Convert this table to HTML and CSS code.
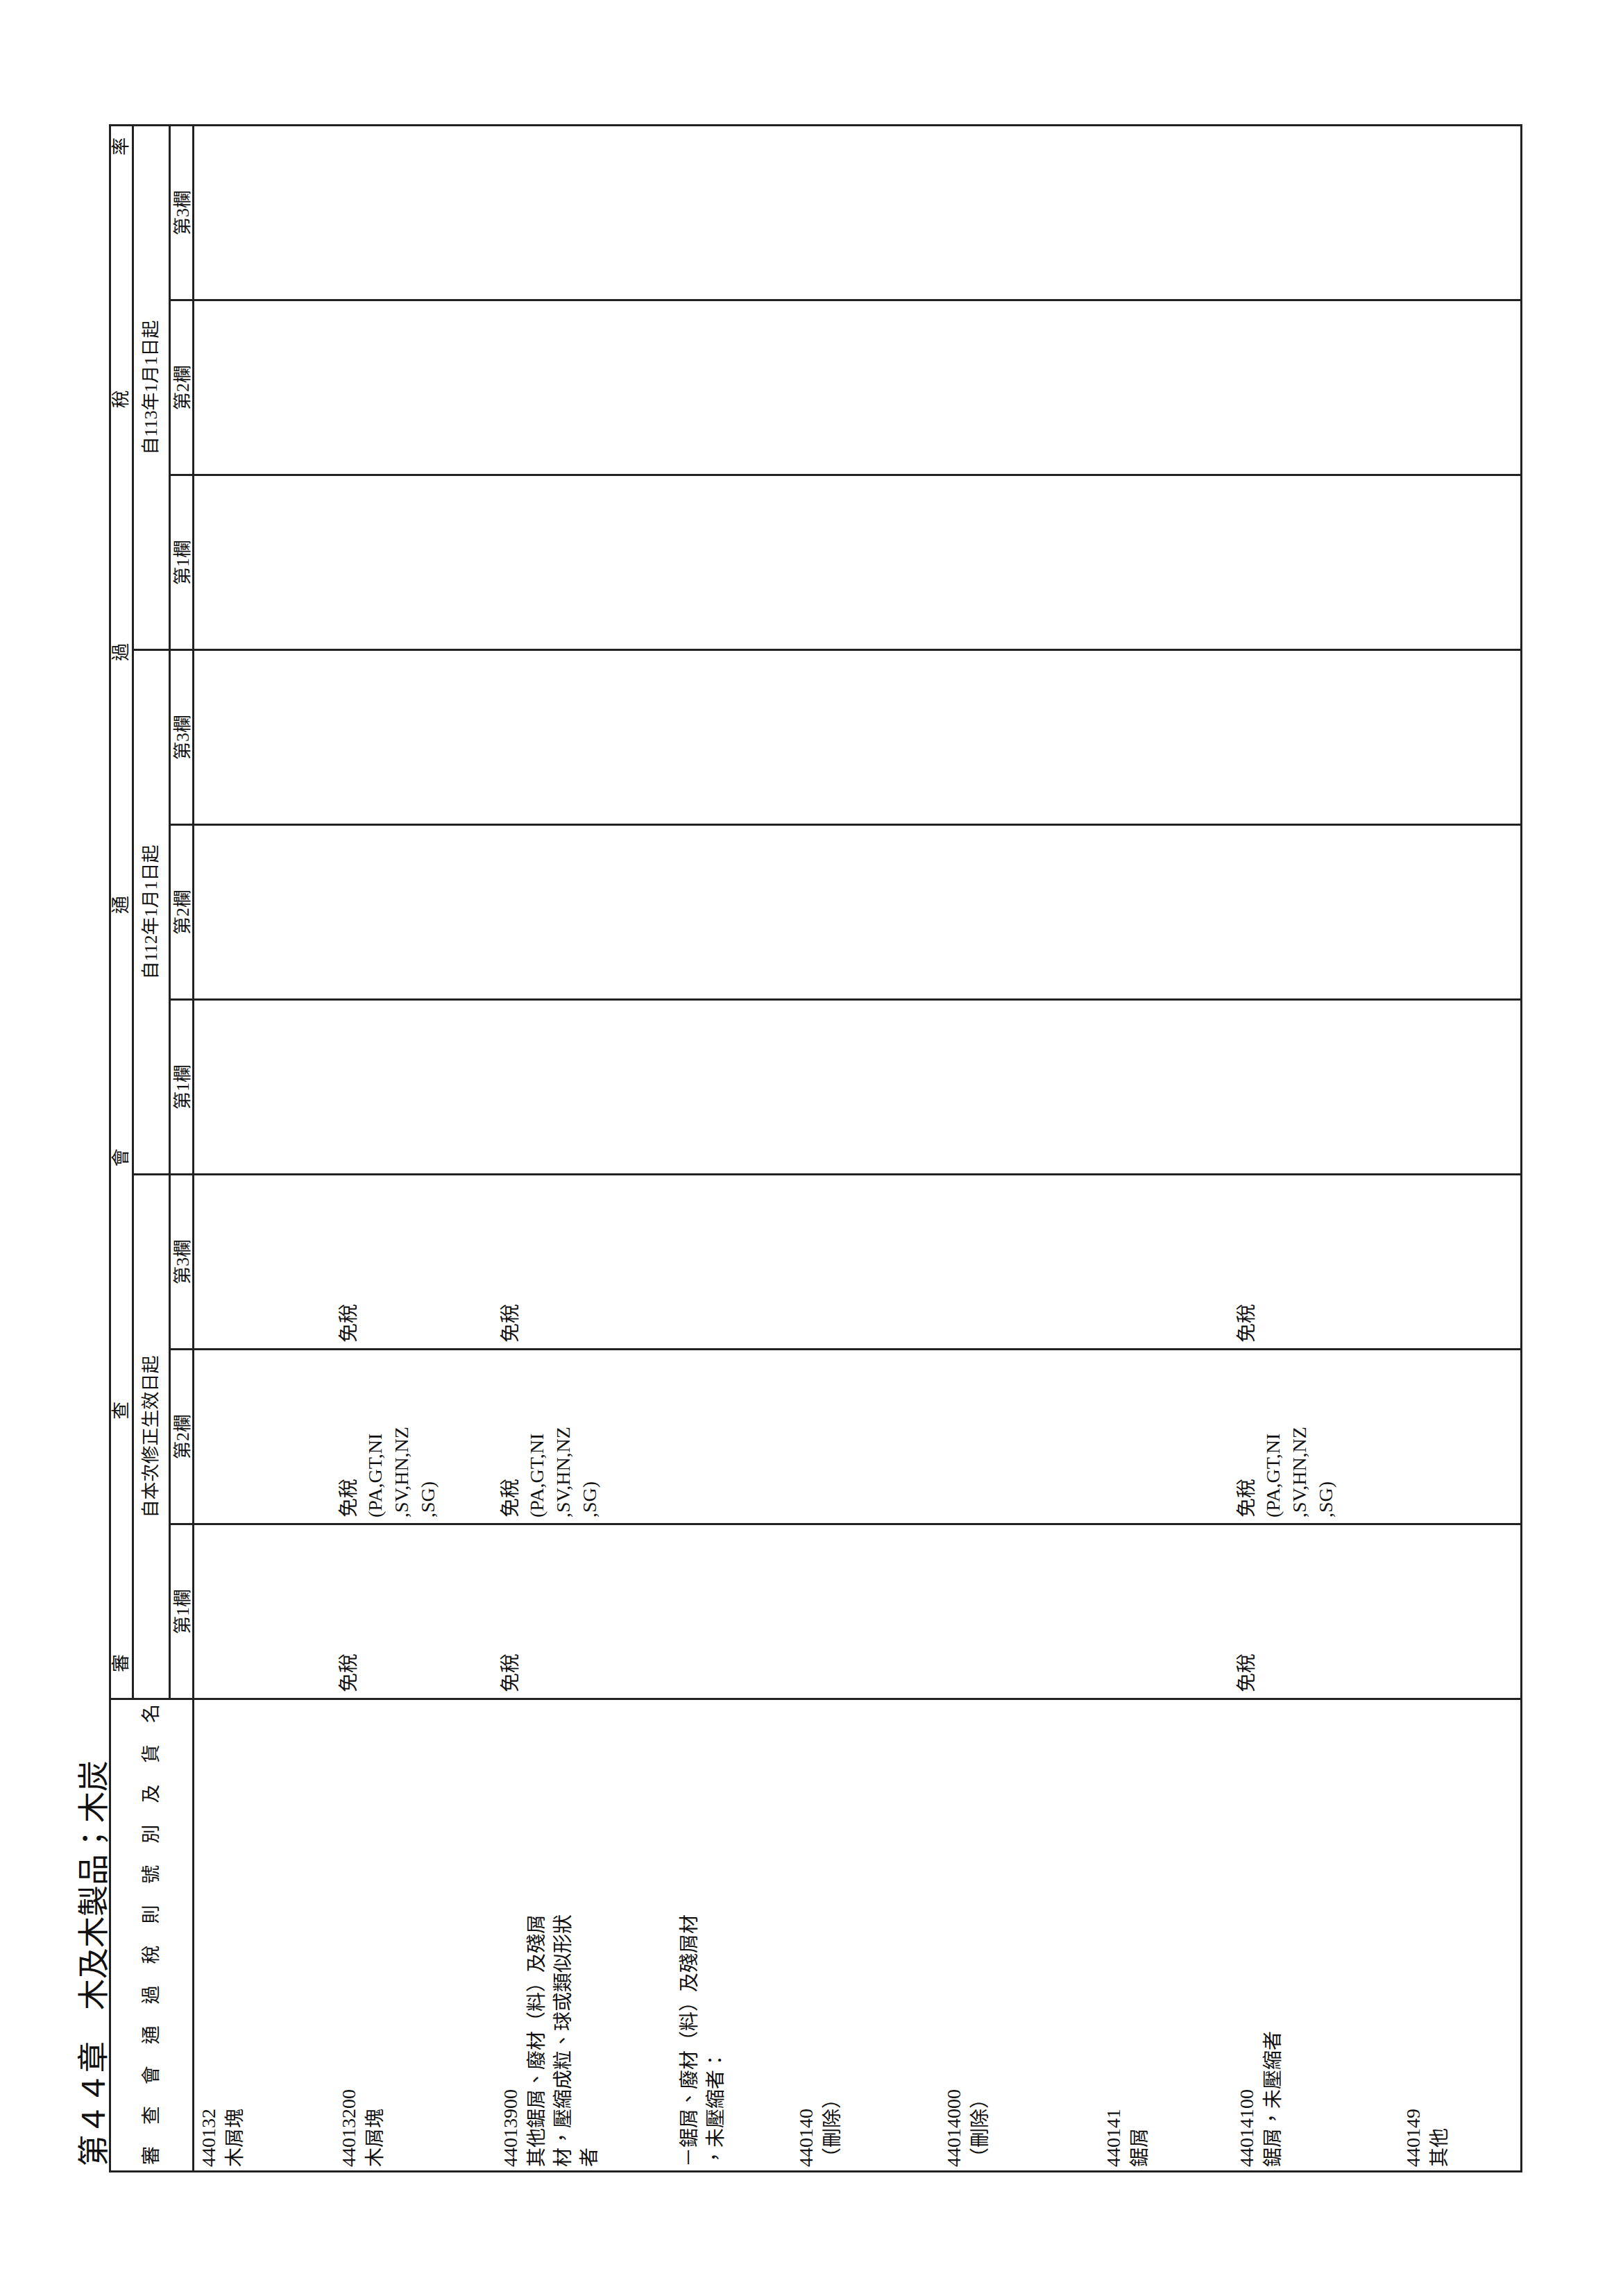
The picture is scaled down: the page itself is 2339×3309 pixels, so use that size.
FILE: index.html
```html
<!DOCTYPE html>
<html lang="zh-Hant">
<head>
<meta charset="utf-8">
<title>第44章 木及木製品；木炭</title>
<link rel="stylesheet" href="styles.css">
</head>
<body>
<div class="sheet">
  <div class="land">
    <h1 class="title">第４４章　木及木製品；木炭</h1>
    <div class="tbl">
      <div class="head">
        <div class="h-goods"><span>審</span><span>查</span><span>會</span><span>通</span><span>過</span><span>稅</span><span>則</span><span>號</span><span>別</span><span>及</span><span>貨</span><span>名</span></div>
        <div class="h-rates">
          <div class="hr1"><span>審</span><span>查</span><span>會</span><span>通</span><span>過</span><span>稅</span><span>率</span></div>
          <div class="hr2">
            <div class="grp">自本次修正生效日起</div>
            <div class="grp">自112年1月1日起</div>
            <div class="grp">自113年1月1日起</div>
          </div>
          <div class="hr3">
            <div class="col">第1欄</div><div class="col">第2欄</div><div class="col">第3欄</div>
            <div class="col">第1欄</div><div class="col">第2欄</div><div class="col">第3欄</div>
            <div class="col">第1欄</div><div class="col">第2欄</div><div class="col">第3欄</div>
          </div>
        </div>
      </div>
      <div class="body">
        <div class="row r1">
          <div class="g">440132<br>木屑塊</div>
          <div class="c"></div><div class="c"></div><div class="c"></div><div class="c"></div><div class="c"></div><div class="c"></div><div class="c"></div><div class="c"></div><div class="c"></div>
        </div>
        <div class="row r2">
          <div class="g">44013200<br>木屑塊</div>
          <div class="c">免稅</div><div class="c">免稅<br>(PA,GT,NI<br>,SV,HN,NZ<br>,SG)</div><div class="c">免稅</div>
          <div class="c"></div><div class="c"></div><div class="c"></div><div class="c"></div><div class="c"></div><div class="c"></div>
        </div>
        <div class="row r3">
          <div class="g">44013900<br>其他鋸屑、廢材（料）及殘屑<br>材，壓縮成粒、球或類似形狀<br>者</div>
          <div class="c">免稅</div><div class="c">免稅<br>(PA,GT,NI<br>,SV,HN,NZ<br>,SG)</div><div class="c">免稅</div>
          <div class="c"></div><div class="c"></div><div class="c"></div><div class="c"></div><div class="c"></div><div class="c"></div>
        </div>
        <div class="row r4">
          <div class="g">－鋸屑、廢材（料）及殘屑材<br>，未壓縮者：</div>
          <div class="c"></div><div class="c"></div><div class="c"></div><div class="c"></div><div class="c"></div><div class="c"></div><div class="c"></div><div class="c"></div><div class="c"></div>
        </div>
        <div class="row r5">
          <div class="g">440140<br>（刪除）</div>
          <div class="c"></div><div class="c"></div><div class="c"></div><div class="c"></div><div class="c"></div><div class="c"></div><div class="c"></div><div class="c"></div><div class="c"></div>
        </div>
        <div class="row r6">
          <div class="g">44014000<br>（刪除）</div>
          <div class="c"></div><div class="c"></div><div class="c"></div><div class="c"></div><div class="c"></div><div class="c"></div><div class="c"></div><div class="c"></div><div class="c"></div>
        </div>
        <div class="row r7">
          <div class="g">440141<br>鋸屑</div>
          <div class="c"></div><div class="c"></div><div class="c"></div><div class="c"></div><div class="c"></div><div class="c"></div><div class="c"></div><div class="c"></div><div class="c"></div>
        </div>
        <div class="row r8">
          <div class="g">44014100<br>鋸屑，未壓縮者</div>
          <div class="c">免稅</div><div class="c">免稅<br>(PA,GT,NI<br>,SV,HN,NZ<br>,SG)</div><div class="c">免稅</div>
          <div class="c"></div><div class="c"></div><div class="c"></div><div class="c"></div><div class="c"></div><div class="c"></div>
        </div>
        <div class="row r9">
          <div class="g">440149<br>其他</div>
          <div class="c"></div><div class="c"></div><div class="c"></div><div class="c"></div><div class="c"></div><div class="c"></div><div class="c"></div><div class="c"></div><div class="c"></div>
        </div>
      </div>
    </div>
  </div>
</div>
</body>
</html>
```
FILE: styles.css
```css
* { box-sizing: border-box; }
html, body { margin: 0; padding: 0; background: #fff; }
body {
  font-family: "Liberation Serif", "Noto Sans CJK TC", serif;
  color: #111;
}
.sheet {
  width: 2339px;
  height: 3309px;
  overflow: hidden;
  background: #fff;
}
.land {
  width: 3309px;
  height: 2339px;
  transform-origin: 0 0;
  transform: translateY(3309px) rotate(-90deg);
  padding: 107px 0 0 178px;
}
.title {
  margin: 0;
  padding-left: 9px;
  height: 50px;
  font-size: 45px;
  line-height: 50px;
  font-weight: normal;
  font-family: "Noto Sans CJK TC", sans-serif;
}
.tbl {
  width: 2952px;
  height: 2037px;
  border: 3px solid #222;
  display: flex;
  flex-direction: column;
}
.head {
  display: flex;
  height: 120px;
  border-bottom: 3px solid #222;
  font-size: 26px;
  line-height: 1;
}
.h-goods {
  width: 678px;
  flex: 0 0 678px;
  display: flex;
  justify-content: space-between;
  align-items: center;
  padding: 0 6px 0 8px;
  font-size: 27px;
}
.h-rates {
  width: 2268px;
  flex: 0 0 2268px;
  border-left: 3px solid #222;
  display: flex;
  flex-direction: column;
}
.hr1 {
  height: 33px;
  border-bottom: 3px solid #222;
  display: flex;
  justify-content: space-between;
  align-items: center;
  padding: 0 16px 0 37px;
}
.hr2 {
  height: 53px;
  border-bottom: 3px solid #222;
  display: flex;
}
.grp {
  flex: 0 0 756px;
  border-left: 3px solid #222;
  display: flex;
  align-items: center;
  justify-content: center;
}
.grp:first-child {
  flex-basis: 753px;
  border-left: 0;
}
.hr3 {
  height: 31px;
  display: flex;
}
.col {
  flex: 0 0 252px;
  border-left: 3px solid #222;
  display: flex;
  align-items: center;
  justify-content: center;
  padding-top: 4px;
}
.col:first-child {
  flex-basis: 249px;
  border-left: 0;
}
.body {
  flex: 1;
  display: flex;
  flex-direction: column;
  font-size: 28px;
  line-height: 38px;
}
.row {
  display: grid;
  grid-template-columns: 678px repeat(9, 252px);
}
.row > div {
  padding-top: 2px;
  white-space: nowrap;
}
.g { padding-left: 5px; }
.c {
  border-left: 3px solid #222;
  padding-left: 8px;
}
.r1 { height: 202px; }
.r2 { height: 233px; }
.r3 { height: 258px; }
.r4 { height: 168px; }
.r5 { height: 213px; }
.r6 { height: 230px; }
.r7 { height: 192px; }
.r8 { height: 240px; }
.r9 { flex: 1; }
```
